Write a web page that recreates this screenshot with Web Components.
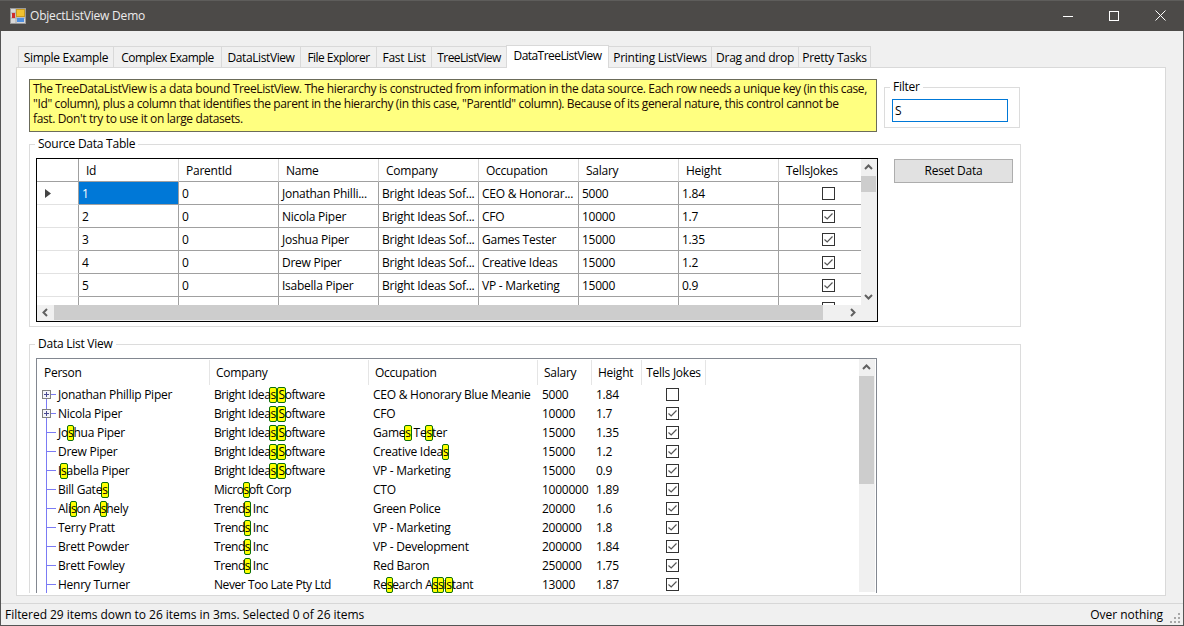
<!DOCTYPE html>
<html>
<head>
<meta charset="utf-8">
<title>ObjectListView Demo</title>
<style>
  html, body { margin: 0; padding: 0; }
  body {
    width: 1184px;
    height: 626px;
    overflow: hidden;
    font: 12px "Open Sans", "Noto Sans", sans-serif;
    letter-spacing: -0.25px;
    color: #000;
    background: #f0f0f0;
  }
</style>
</head>
<body>
<demo-window>
  <title-bar slot="title">ObjectListView Demo</title-bar>
  <tab-strip slot="tabs">
    <tab-button w="95" style="letter-spacing:-0.3px">Simple Example</tab-button>
    <tab-button w="108" style="letter-spacing:-0.5px">Complex Example</tab-button>
    <tab-button w="79" style="letter-spacing:-0.4px">DataListView</tab-button>
    <tab-button w="76" style="letter-spacing:-0.55px">File Explorer</tab-button>
    <tab-button w="55">Fast List</tab-button>
    <tab-button w="75" style="letter-spacing:-0.6px">TreeListView</tab-button>
    <tab-button w="102" style="letter-spacing:-0.55px" selected>DataTreeListView</tab-button>
    <tab-button w="103">Printing ListViews</tab-button>
    <tab-button w="87">Drag and drop</tab-button>
    <tab-button w="72">Pretty Tasks</tab-button>
  </tab-strip>
  <tab-page slot="page">
    <div style="display:flex;gap:7px;align-items:flex-start">
      <hint-box>The TreeDataListView is a data bound TreeListView. The hierarchy is constructed from information in the data source. Each row needs a unique key (in this case,<br>"Id" column), plus a column that identifies the parent in the hierarchy (in this case, "ParentId" column). Because of its general nature, this control cannot be<br>fast. Don't try to use it on large datasets.</hint-box>
      <group-box label="Filter" style="width:136px;height:41px;margin-top:8px">
        <filter-input value="S"></filter-input>
      </group-box>
    </div>
    <group-box label="Source Data Table" style="width:992px;height:183px;margin-top:12px">
      <div style="display:flex;gap:16px;align-items:flex-start;padding:13px 0 0 6px">
        <source-grid></source-grid>
        <reset-button>Reset Data</reset-button>
      </div>
    </group-box>
    <group-box label="Data List View" style="width:992px;height:270px;margin-top:17px">
      <div style="padding:13px 0 0 6px"><tree-list></tree-list></div>
    </group-box>
  </tab-page>
  <status-strip slot="status" right="Over nothing">Filtered 29 items down to 26 items in 3ms. Selected 0 of 26 items</status-strip>
</demo-window>

<script>
const GRID_ROWS = [
  ['1', '0', 'Jonathan Philli...', 'Bright Ideas Sof...', 'CEO & Honorar...', '5000', '1.84', false],
  ['2', '0', 'Nicola Piper', 'Bright Ideas Sof...', 'CFO', '10000', '1.7', true],
  ['3', '0', 'Joshua Piper', 'Bright Ideas Sof...', 'Games Tester', '15000', '1.35', true],
  ['4', '0', 'Drew Piper', 'Bright Ideas Sof...', 'Creative Ideas', '15000', '1.2', true],
  ['5', '0', 'Isabella Piper', 'Bright Ideas Sof...', 'VP - Marketing', '15000', '0.9', true],
  ['', '', '', '', '', '', '', false]
];

const LIST_ROWS = [
  ['Jonathan Phillip Piper', 'Bright Ideas Software', 'CEO & Honorary Blue Meanie', '5000', '1.84', false],
  ['Nicola Piper', 'Bright Ideas Software', 'CFO', '10000', '1.7', true],
  ['Joshua Piper', 'Bright Ideas Software', 'Games Tester', '15000', '1.35', true],
  ['Drew Piper', 'Bright Ideas Software', 'Creative Ideas', '15000', '1.2', true],
  ['Isabella Piper', 'Bright Ideas Software', 'VP - Marketing', '15000', '0.9', true],
  ['Bill Gates', 'Microsoft Corp', 'CTO', '1000000', '1.89', true],
  ['Alison Ashely', 'Trends Inc', 'Green Police', '20000', '1.6', true],
  ['Terry Pratt', 'Trends Inc', 'VP - Marketing', '200000', '1.8', true],
  ['Brett Powder', 'Trends Inc', 'VP - Development', '200000', '1.84', true],
  ['Brett Fowley', 'Trends Inc', 'Red Baron', '250000', '1.75', true],
  ['Henry Turner', 'Never Too Late Pty Ltd', 'Research Assistant', '13000', '1.87', true]
];

const escapeHtml = s => s.replace(/&/g, '&amp;').replace(/</g, '&lt;');

// wraps every filter match so the yellow pill can sit behind it
const highlight = text => escapeHtml(text).replace(/s/gi, m => `<mark>${m}</mark>`);

const checkSvg = checked => `
  <svg width="13" height="13" viewBox="0 0 13 13" style="display:block">
    <rect x="0.5" y="0.5" width="12" height="12" fill="#fff" stroke="#333"/>
    ${checked ? '<path d="M2.5 6.5 L5.2 9 L10.5 3.5" fill="none" stroke="#555" stroke-width="1.2"/>' : ''}
  </svg>`;

class DemoWindow extends HTMLElement {
  constructor() {
    super();
    this.attachShadow({ mode: 'open' }).innerHTML = `
      <style>
        :host {
          display: flex;
          flex-direction: column;
          width: 1184px;
          height: 626px;
          box-sizing: border-box;
          border: 1px solid #555;
          border-top: 0;
          background: #f0f0f0;
        }
        .body { padding: 14px 17px 0 15px; }
      </style>
      <slot name="title"></slot>
      <div class="body">
        <slot name="tabs"></slot>
        <slot name="page"></slot>
      </div>
      <slot name="status"></slot>
    `;
  }
}

class TitleBar extends HTMLElement {
  constructor() {
    super();
    this.attachShadow({ mode: 'open' }).innerHTML = `
      <style>
        :host {
          display: flex;
          align-items: center;
          height: 31px;
          margin: 0 -1px;
          padding: 0 1px 1px 10px;
          background: #4c4a48;
          border-top: 1px solid #5e5d5b;
          box-sizing: border-box;
          color: #ececec;
          letter-spacing: -0.2px;
        }
        .text { margin-left: 4px; flex: 1; }
        .btn { width: 46px; height: 29px; display: flex; align-items: center; justify-content: center; }
      </style>
      <svg width="16" height="16" viewBox="0 0 16 16">
        <rect x="0.5" y="0.5" width="15" height="15" fill="#d8d8d8" stroke="#9a9a9a"/>
        <path d="M1 5H6M1 10H6M6 1V15M6 10H15" stroke="#a8a8a8"/>
        <rect x="6.5" y="1.5" width="8" height="7" fill="#f2c230" stroke="#c99a20"/>
        <rect x="2" y="5" width="3" height="5" fill="#d02c2c"/>
        <rect x="7" y="10" width="7" height="4" fill="#4f8fe0"/>
      </svg>
      <span class="text"><slot></slot></span>
      <div class="btn"><svg width="10" height="10"><path d="M0 5.5H10" stroke="#fff"/></svg></div>
      <div class="btn"><svg width="10" height="10"><rect x="0.5" y="0.5" width="9" height="9" fill="none" stroke="#fff"/></svg></div>
      <div class="btn"><svg width="11" height="11"><path d="M0.5 0.5L10.5 10.5M10.5 0.5L0.5 10.5" stroke="#fff"/></svg></div>
    `;
  }
}

class TabStrip extends HTMLElement {
  constructor() {
    super();
    this.attachShadow({ mode: 'open' }).innerHTML = `
      <style>
        :host { display: flex; align-items: flex-end; height: 23px; padding-left: 2px; margin-bottom: -1px; position: relative; z-index: 1; }
      </style>
      <slot></slot>
    `;
  }
}

class TabButton extends HTMLElement {
  constructor() {
    super();
    this.attachShadow({ mode: 'open' }).innerHTML = `
      <style>
        :host {
          display: flex;
          align-items: center;
          justify-content: center;
          box-sizing: border-box;
          height: 21px;
          border: 1px solid #d9d9d9;
          border-bottom: 0;
          margin-bottom: 1px;
          margin-right: -1px;
          background: #f0f0f0;
          white-space: nowrap;
        }
        :host([selected]) {
          height: 23px;
          margin-bottom: 0;
          padding-bottom: 3px;
          background: #fff;
          position: relative;
          z-index: 1;
        }
      </style>
      <slot></slot>
    `;
  }
  connectedCallback() {
    this.style.width = (Number(this.getAttribute('w')) + 1) + 'px';
  }
}

class TabPage extends HTMLElement {
  constructor() {
    super();
    this.attachShadow({ mode: 'open' }).innerHTML = `
      <style>
        :host {
          display: block;
          box-sizing: border-box;
          width: 1150px;
          height: 529px;
          background: #fff;
          border: 1px solid #d9d9d9;
          padding-bottom: 2px;
        }
        .clip { height: 100%; overflow: hidden; padding: 11px 0 0 12px; box-sizing: border-box; }
      </style>
      <div class="clip"><slot></slot></div>
    `;
  }
}

class HintBox extends HTMLElement {
  constructor() {
    super();
    this.attachShadow({ mode: 'open' }).innerHTML = `
      <style>
        :host {
          display: block;
          box-sizing: border-box;
          width: 848px;
          height: 53px;
          padding: 1px 3px;
          background: #ffff80;
          border: 1px solid #6b6b5a;
          color: #200800;
          line-height: 15px;
          letter-spacing: -0.365px;
          white-space: nowrap;
        }
      </style>
      <slot></slot>
    `;
  }
}

class GroupBox extends HTMLElement {
  constructor() {
    super();
    this.attachShadow({ mode: 'open' }).innerHTML = `
      <style>
        :host {
          display: block;
          box-sizing: border-box;
          border: 1px solid #dcdcdc;
          position: relative;
        }
        .label {
          position: absolute;
          top: -9px;
          left: 5px;
          padding: 0 3px;
          line-height: 16px;
          background: #fff;
        }
      </style>
      <span class="label"></span>
      <slot></slot>
    `;
    this.shadowRoot.querySelector('.label').textContent = this.getAttribute('label');
  }
}

class FilterInput extends HTMLElement {
  constructor() {
    super();
    this.attachShadow({ mode: 'open' }).innerHTML = `
      <style>
        :host { display: block; padding: 11px 0 0 7px; }
        .box {
          box-sizing: border-box;
          width: 116px;
          height: 23px;
          border: 1px solid #0078d7;
          padding-left: 2px;
          line-height: 21px;
          background: #fff;
        }
      </style>
      <div class="box"></div>
    `;
    this.shadowRoot.querySelector('.box').textContent = this.getAttribute('value');
  }
}

class ResetButton extends HTMLElement {
  constructor() {
    super();
    this.attachShadow({ mode: 'open' }).innerHTML = `
      <style>
        :host {
          display: flex;
          align-items: center;
          justify-content: center;
          box-sizing: border-box;
          width: 119px;
          height: 24px;
          margin-top: 1px;
          padding-bottom: 1px;
          background: #e1e1e1;
          border: 1px solid #adadad;
        }
      </style>
      <slot></slot>
    `;
  }
}

class ScrollBar extends HTMLElement {
  // before/size/after are the track lengths, in pixels, around the thumb
  constructor() {
    super();
    this.attachShadow({ mode: 'open' });
  }
  connectedCallback() {
    const horizontal = this.getAttribute('orient') === 'h';
    const before = this.getAttribute('before');
    const size = this.getAttribute('size');
    const after = this.getAttribute('after');
    const chevron = d => `<svg width="9" height="9" viewBox="0 0 9 9"><path d="${d}" fill="none" stroke="#606060" stroke-width="2"/></svg>`;
    const first = horizontal ? chevron('M6 1 L2.5 4.5 L6 8') : chevron('M1 6 L4.5 2.5 L8 6');
    const last = horizontal ? chevron('M3 1 L6.5 4.5 L3 8') : chevron('M1 3 L4.5 6.5 L8 3');
    this.shadowRoot.innerHTML = `
      <style>
        :host {
          display: flex;
          flex-direction: ${horizontal ? 'row' : 'column'};
          background: #f0f0f0;
          box-sizing: border-box;
          ${horizontal ? 'height: 16px; padding-bottom: 1px;' : 'width: 16px; padding-right: 1px;'}
        }
        .arrow { flex: 0 0 17px; display: flex; align-items: center; justify-content: center; }
        .thumb { background: #cdcdcd; flex: 0 0 ${size}px; }
      </style>
      <div class="arrow">${first}</div>
      <div style="flex:0 0 ${before}px"></div>
      <div class="thumb"></div>
      <div style="flex:0 0 ${after}px"></div>
      ${this.hasAttribute('no-last') ? '' : `<div class="arrow">${last}</div>`}
    `;
  }
}

class SourceGrid extends HTMLElement {
  constructor() {
    super();
    const headers = ['Id', 'ParentId', 'Name', 'Company', 'Occupation', 'Salary', 'Height', 'TellsJokes'];
    const headRow = headers.map((h, i) => `<div class="hc ${i === 7 ? 'last' : ''}">${h}</div>`).join('');
    const rows = GRID_ROWS.map((r, ri) => {
      const cells = r.slice(0, 7).map((c, i) =>
        `<div class="c ${ri === 0 && i === 0 ? 'sel' : ''}">${escapeHtml(c)}</div>`).join('');
      return `<div class="rh">${ri === 0 ? '<svg width="6" height="9"><path d="M0 0L6 4.5L0 9Z" fill="#444"/></svg>' : ''}</div>${cells}<div class="c chk">${checkSvg(r[7])}</div>`;
    }).join('');
    this.attachShadow({ mode: 'open' }).innerHTML = `
      <style>
        :host {
          display: grid;
          grid-template-columns: 824px 16px;
          grid-template-rows: 146px 16px;
          box-sizing: border-box;
          width: 842px;
          height: 164px;
          border: 1px solid #000;
          background: #f0f0f0;
        }
        .rows {
          overflow: hidden;
          background: #fff;
          display: grid;
          grid-template-columns: 42px repeat(7, 100px) 82px;
          grid-auto-rows: 23px;
        }
        .hc, .corner { box-sizing: border-box; border-bottom: 1px solid #a0a0a0; border-right: 1px solid #d8d8d8; padding: 1px 0 0 7px; line-height: 21px; }
        .corner { border-right-color: #a0a0a0; }
        .hc.last { border-right: 0; }
        .rh { box-sizing: border-box; border-bottom: 1px solid #e2e2e2; border-right: 1px solid #a0a0a0; display: flex; align-items: center; padding: 0 0 0 8px; }
        .c { box-sizing: border-box; border-bottom: 1px solid #a0a0a0; border-right: 1px solid #a0a0a0; padding-left: 3px; line-height: 24px; height: 23px; white-space: nowrap; overflow: hidden; }
        .sel { background: #0078d7; color: #fff; }
        .chk { border-right: 0; padding: 0 0 0 17px; display: flex; align-items: center; justify-content: center; }
      </style>
      <div class="rows">
        <div class="corner"></div>${headRow}${rows}
      </div>
      <scroll-bar before="0" size="16" after="96"></scroll-bar>
      <scroll-bar orient="h" before="0" size="769" after="21"></scroll-bar>
      <div></div>
    `;
  }
}

class TreeList extends HTMLElement {
  constructor() {
    super();
    const headers = ['Person', 'Company', 'Occupation', 'Salary', 'Height', 'Tells Jokes'];
    const head = headers.map((h, i) => `<div class="hc h${i}">${h}</div>`).join('');
    const gutter = i => i < 2
      ? `<svg width="21" height="19" viewBox="0 0 21 19" style="flex:none">
           <path d="M9.5 ${i === 0 ? 10 : 0}V19M14 9.5H19" stroke="#7b7bf4" fill="none"/>
           <rect x="5.5" y="5.5" width="8" height="8" fill="#f4f4f8" stroke="#808080"/>
           <path d="M7 9.5H12M9.5 7V12" stroke="#4a4a90"/>
         </svg>`
      : `<svg width="21" height="19" viewBox="0 0 21 19" style="flex:none">
           <path d="M9.5 0V19M9.5 9.5H19" stroke="#7b7bf4" fill="none"/>
         </svg>`;
    const rows = LIST_ROWS.map((r, i) => `
      <div class="c first">${gutter(i)}<span>${highlight(r[0])}</span></div>
      <div class="c co">${highlight(r[1])}</div>
      <div class="c">${highlight(r[2])}</div>
      <div class="c">${r[3]}</div>
      <div class="c">${r[4]}</div>
      <div class="c chk">${checkSvg(r[5])}</div>
      <div></div>
    `).join('');
    this.attachShadow({ mode: 'open' }).innerHTML = `
      <style>
        :host {
          display: grid;
          grid-template-columns: 822px 16px;
          box-sizing: border-box;
          width: 841px;
          height: 300px;
          border: 1px solid #828790;
          background: #fff;
        }
        .rows {
          display: grid;
          grid-template-columns: 173px 159px 169px 54px 50px 64px 1fr;
          grid-template-rows: 26px;
          grid-auto-rows: 19px;
          align-content: start;
          isolation: isolate;
        }
        .hc { box-sizing: border-box; padding: 1px 0 0 6px; margin-top: 1px; line-height: 24px; border-right: 1px solid #e5e5e5; }
        .h0 { padding-left: 7px; }
        .h5 { padding-left: 0; text-align: center; }
        .c { padding-left: 4px; line-height: 19px; white-space: nowrap; }
        .co { letter-spacing: -0.42px; }
        .first { display: flex; padding: 0; }
        .first span { display: block; }
        .chk { padding: 0 3px 0 0; display: flex; align-items: center; justify-content: center; }
        mark { background: none; color: inherit; position: relative; }
        mark::before {
          content: "";
          position: absolute;
          left: -1px;
          right: -1px;
          top: 50%;
          height: 14px;
          margin-top: -8px;
          background: #ffff00;
          border: 1px solid #0a6e0a;
          border-radius: 2px;
          z-index: -1;
        }
      </style>
      <div class="rows">${head}<div></div>${rows}</div>
      <scroll-bar style="height:233px" before="0" size="108" after="108" no-last></scroll-bar>
    `;
  }
}

class StatusStrip extends HTMLElement {
  constructor() {
    super();
    this.attachShadow({ mode: 'open' }).innerHTML = `
      <style>
        :host {
          display: flex;
          align-items: center;
          box-sizing: border-box;
          height: 22px;
          margin-top: 7px;
          border-top: 1px solid #d7d7d7;
          padding: 0 2px 0 4px;
          white-space: nowrap;
          letter-spacing: -0.04px;
        }
        .left { flex: 1; }
        .grip { margin: 6px 0 0 6px; }
      </style>
      <span class="left"><slot></slot></span>
      <span class="right"></span>
      <svg class="grip" width="12" height="12" viewBox="0 0 12 12" fill="#a8a8a8">
        <rect x="9" y="1" width="2" height="2"/>
        <rect x="5" y="5" width="2" height="2"/><rect x="9" y="5" width="2" height="2"/>
        <rect x="1" y="9" width="2" height="2"/><rect x="5" y="9" width="2" height="2"/><rect x="9" y="9" width="2" height="2"/>
      </svg>
    `;
    this.shadowRoot.querySelector('.right').textContent = this.getAttribute('right');
  }
}

// scroll-bar goes first, the grids below put it in their shadow roots
customElements.define('scroll-bar', ScrollBar);
customElements.define('demo-window', DemoWindow);
customElements.define('title-bar', TitleBar);
customElements.define('tab-strip', TabStrip);
customElements.define('tab-button', TabButton);
customElements.define('tab-page', TabPage);
customElements.define('hint-box', HintBox);
customElements.define('group-box', GroupBox);
customElements.define('filter-input', FilterInput);
customElements.define('reset-button', ResetButton);
customElements.define('source-grid', SourceGrid);
customElements.define('tree-list', TreeList);
customElements.define('status-strip', StatusStrip);
</script>
</body>
</html>
